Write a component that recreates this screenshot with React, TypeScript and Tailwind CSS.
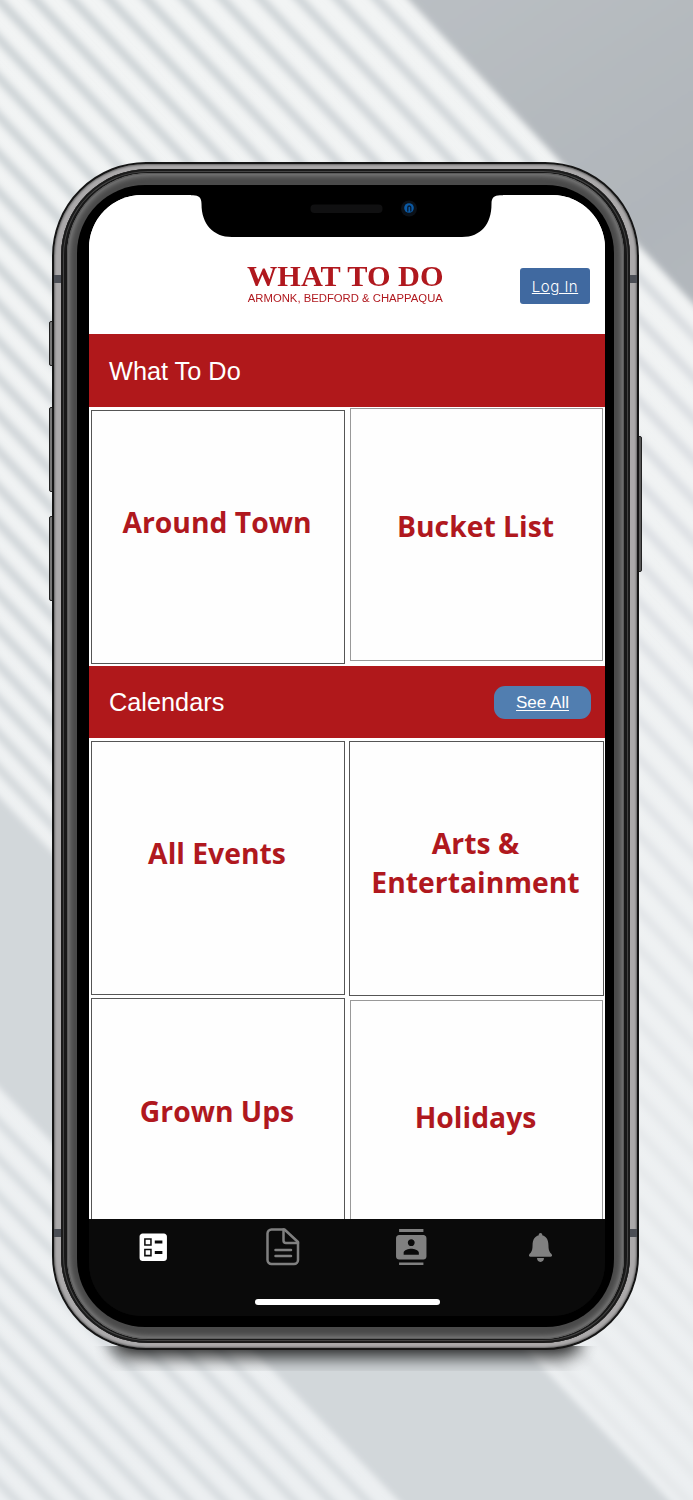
import { MdBallot, MdContacts } from "react-icons/md";
import { IoIosNotifications } from "react-icons/io";

interface TileProps {
    label: string;
    className: string;
}

// slanted blind slats, spacing gets tighter towards the bottom
const makeSlats = (from: number, to: number, first: number, last: number) => {
    const slats: number[] = [];
    let c = from;
    while (c > to) {
        slats.push(c);
        c -= first + ((last - first) * (from - c)) / (from - to);
    }
    return slats;
};

const upperSlats = makeSlats(378, -735, 39, 32);
const lowerSlats = makeSlats(-1090, -1560, 36, 33);

const Wall = () => (
    <svg className="absolute inset-0" width="693" height="1500" viewBox="0 0 693 1500">
        <defs>
            <filter id="soft" x="-20%" y="-20%" width="140%" height="140%">
                <feGaussianBlur stdDeviation="3.2" />
            </filter>
            <filter id="shadow" x="-20%" y="-100%" width="140%" height="300%">
                <feGaussianBlur stdDeviation="9" />
            </filter>
            <linearGradient id="slat" gradientUnits="userSpaceOnUse" x1="0" y1="0" x2="900" y2="900">
                <stop offset="0" stopColor="#cdd3d6" />
                <stop offset="0.4" stopColor="#d3d8db" />
                <stop offset="0.65" stopColor="#dde0e4" />
                <stop offset="1" stopColor="#e6e9eb" />
            </linearGradient>
            <linearGradient id="corner" x1="0" y1="0" x2="0.6" y2="1">
                <stop offset="0" stopColor="#bcc1c5" />
                <stop offset="0.5" stopColor="#b0b5ba" />
                <stop offset="1" stopColor="#b8bec4" />
            </linearGradient>
            <linearGradient id="base" x1="0" y1="0" x2="0" y2="1">
                <stop offset="0" stopColor="#f2f4f4" />
                <stop offset="1" stopColor="#eceff1" />
            </linearGradient>
            <clipPath id="floor">
                <rect x="0" y="1346" width="693" height="25" />
            </clipPath>
        </defs>
        <rect width="693" height="1500" fill="url(#base)" />
        <g filter="url(#soft)">
            {upperSlats.map((c) => (
                <line key={c} x1={c - 47} y1={-50} x2={c + 1457} y2={1550} stroke="url(#slat)" strokeWidth="9" />
            ))}
            {lowerSlats.map((c) => (
                <line key={c} x1={c} y1={0} x2={c + 1504} y2={1550} stroke="#d8dde0" strokeWidth="8.500" />
            ))}
            <polygon points="362,-50 980,-50 980,610" fill="url(#corner)" />
            <polygon points="-50,745 720,1554 450,1554 -50,1037" fill="#d2d7da" />
        </g>
        <g clipPath="url(#floor)">
            <rect x="112" y="1310" width="468" height="47" rx="16" fill="#000" opacity="0.85" filter="url(#shadow)" />
        </g>
    </svg>
);

const Tile = ({ label, className }: TileProps) => (
    <div
        className={`flex items-center justify-center border bg-[#fefefe] pr-[2px] text-center font-['Open_Sans','Noto_Sans',sans-serif] text-[28.300px] leading-[39px] font-bold text-[#b0181e] ${className}`}
    >
        {label}
    </div>
);

const Notch = () => (
    <svg className="absolute top-0 left-[102px]" width="312" height="43" viewBox="0 0 312 43">
        <path d="M0 0H312V0.3H309C303 0.3 300.500 3 300.500 9C300.500 29 290 42 271 42H41C22 42 10.500 29 10.500 9C10.500 3 8 0.300 2 0.300H0Z" fill="#000" />
        <rect x="119.500" y="9.500" width="72" height="8.500" rx="4" fill="#101011" />
        <circle cx="218" cy="13.500" r="8" fill="#0b1118" />
        <circle cx="218" cy="13" r="4.800" fill="#0b5aa5" />
        <path d="M216.800 16.500V12.500A1.500 1.500 0 0 1 219.800 12.500V16.500" fill="none" stroke="#07182c" strokeWidth="1.300" />
    </svg>
);

const Header = () => (
    <header className="grid h-[139px] shrink-0 grid-cols-[1fr_198px_1fr] bg-white">
        <div className="col-start-2 flex flex-col items-center pt-[66px] pr-[3px] text-[#b0181e]">
            <div className="origin-center scale-x-[1.01] font-['Liberation_Serif',serif] text-[30px] leading-[30px] font-bold whitespace-nowrap">
                WHAT TO DO
            </div>
            <div className="mt-[2px] origin-center scale-x-[1.13] font-['Liberation_Sans',sans-serif] text-[10px] leading-[12px] whitespace-nowrap">
                ARMONK, BEDFORD &amp; CHAPPAQUA
            </div>
        </div>
        <div className="flex justify-end pt-[73px] pr-[15px]">
            <button className="h-9 w-[70px] rounded-[3px] bg-[#4069a0] pt-[3px] font-['Inter',sans-serif] text-[15px] font-light tracking-[0.500px] text-white underline">
                Log In
            </button>
        </div>
    </header>
);

const TabBar = () => (
    <nav className="flex h-24 shrink-0 flex-col items-center bg-[#0a0a0a] text-[#808080]">
        <div className="grid h-[56px] w-full grid-cols-4 place-items-center">
            <MdBallot size={36.5} className="text-white" />
            <svg width="34" height="38" viewBox="0 0 34 38" fill="none" stroke="currentColor" strokeWidth="2.500" strokeLinejoin="round" strokeLinecap="round">
                <path d="M5.500 1.500H18.500L32 14V32A4 4 0 0 1 28 36H5.500A4 4 0 0 1 1.500 32V5.500A4 4 0 0 1 5.500 1.500Z" />
                <path d="M17.500 1.500V12.500A2.500 2.500 0 0 0 20 15H32" />
                <path d="M9.500 22H25M9.500 28H25" />
            </svg>
            <MdContacts size={36.5} />
            <IoIosNotifications size={37} />
        </div>
        <div className="mt-6 h-1.5 w-[185px] rounded-full bg-white" />
    </nav>
);

const Screen = () => (
    <div className="relative flex h-full w-full flex-col overflow-hidden rounded-[53px] bg-[linear-gradient(#fff_50%,#0a0a0a_50%)]">
        <Header />
        <div className="flex h-[73px] shrink-0 items-center bg-[#b0181b] pt-[2px] pl-5 font-['Liberation_Sans',sans-serif] text-[25.300px] text-white">
            What To Do
        </div>
        <div className="flex h-[259px] shrink-0 items-start gap-[4px] bg-white pt-px pl-[2px]">
            <Tile label="Around Town" className="mt-[2px] h-[254px] w-[254px] border-[#555] pb-[29px]" />
            <Tile label="Bucket List" className="ml-px h-[253px] w-[253px] border-[#999] pb-[16px]" />
        </div>
        <div className="flex h-[72px] shrink-0 items-center justify-between bg-[#b0181b] pr-[14px] pl-5 font-['Liberation_Sans',sans-serif] text-white">
            <span className="pt-[2px] text-[25.300px]">Calendars</span>
            <button className="h-[33px] w-[97px] rounded-[11px] bg-[#517eb0] pt-px text-[17px] underline underline-offset-2">
                See All
            </button>
        </div>
        <div className="flex h-[260px] shrink-0 items-start gap-[4px] bg-white pt-[3px] pl-[2px]">
            <Tile label="All Events" className="h-[254px] w-[254px] border-[#555] pb-[29px]" />
            <Tile label="Arts & Entertainment" className="h-[255px] w-[255px] border-[#555] pb-[12px]" />
        </div>
        <div className="flex h-[221px] shrink-0 items-start gap-[4px] overflow-hidden bg-white pl-[2px]">
            <Tile label="Grown Ups" className="h-[254px] w-[254px] shrink-0 border-[#555] pb-[28px]" />
            <Tile label="Holidays" className="mt-[2px] ml-px h-[253px] w-[253px] shrink-0 border-[#999] pb-[18px]" />
        </div>
        <TabBar />
        <Notch />
    </div>
);

const Phone = () => (
    <div className="relative h-[1188px] w-[587px]">
        <div className="absolute top-[159px] left-[-3px] h-[45px] w-2 rounded-[2px] border border-[#222] bg-[#777]" />
        <div className="absolute top-[245px] left-[-3px] h-[85px] w-2 rounded-[2px] border border-[#222] bg-[#777]" />
        <div className="absolute top-[354px] left-[-3px] h-[85px] w-2 rounded-[2px] border border-[#222] bg-[#777]" />
        <div className="absolute top-[274px] right-[-3px] h-[136px] w-2 rounded-[2px] border border-[#222] bg-[#555]" />
        <div className="relative h-full w-full rounded-[94px] border-2 border-[#151515] bg-[#aba9aa] px-[7px] py-[5px] shadow-[inset_0_0_2px_1px_#666]">
            <div className="absolute top-[111px] left-0 h-2 w-full bg-[#4b4e55]" />
            <div className="absolute top-[1065px] left-0 h-2 w-full bg-[#4b4e55]" />
            <div className="relative h-full w-full rounded-[87px] bg-[#181818] px-[6px] py-[4px] shadow-[inset_0_0_0_2px_#1b1b1b,inset_0_0_0_3px_#444]">
                <div className="h-full w-full rounded-[82px] bg-[#4a4a4a] px-[10px] py-[12px] shadow-[inset_0_0_0_1px_#5c5c5c,inset_0_0_5px_3px_#7c7c7c]">
                    <div className="h-full w-full rounded-[68px] bg-black pt-[10px] pr-[9px] pb-[11px] pl-[12px]">
                        <Screen />
                    </div>
                </div>
            </div>
        </div>
    </div>
);

export default function App() {
    return (
        <main className="relative h-[1500px] w-[693px] overflow-hidden">
            <Wall />
            <div className="relative pt-[162px] pl-[52px]">
                <Phone />
            </div>
        </main>
    );
}
